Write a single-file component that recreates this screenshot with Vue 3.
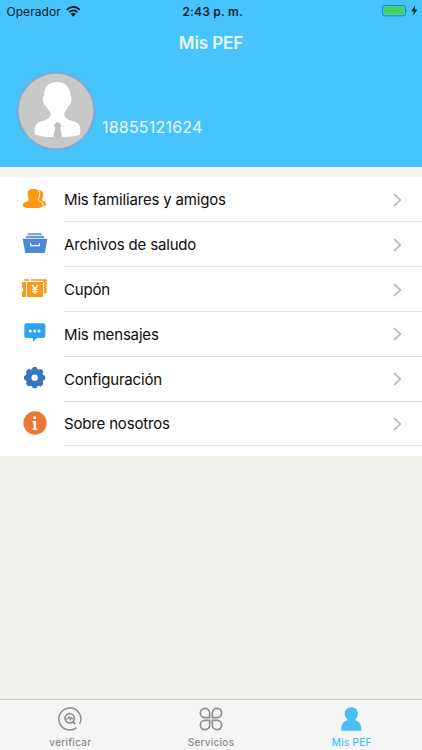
<template>
  <div class="page">
    <header class="header">
      <div class="status-bar">
        <div class="carrier">
          <span class="carrier-name">Operador</span>
          <svg class="wifi" viewBox="0 0 42 32">
            <path d="M2 11 Q21 -6 40 11" />
            <path d="M9 18 Q21 7 33 18" />
            <path class="solid" d="M13.5 23 Q21 16 28.5 23 L21 31 Z" />
          </svg>
        </div>
        <div class="time">2:43 p. m.</div>
        <div class="power">
          <svg class="battery" viewBox="0 0 78 34">
            <rect class="case" x="1.5" y="1.5" width="69" height="31" rx="6" />
            <rect class="charge" x="6" y="6" width="60" height="22" rx="2" />
            <path class="cap" d="M74 11 Q78 17 74 23 Z" />
          </svg>
          <svg class="bolt" viewBox="0 0 18 32">
            <path d="M12 1 L0 18 H8 L5 31 L18 13 H10 Z" />
          </svg>
        </div>
      </div>
      <h1 class="title">Mis PEF</h1>
      <div class="profile">
        <svg class="avatar" viewBox="49 33 240 240">
          <circle cx="169" cy="153" r="115.5" fill="#c8c8c8" stroke="#72aedb" stroke-width="7" />
          <path
            fill="#fff"
            d="M172 66 C196 66 212 81 212 107 C217 112 216 119 214 125 C213 132 209 135 206 139 C202 149 194 154 194 162 C194 174 207 180 221 184 C236 188 242 195 242 213 C242 220 242 223 239 225 C224 230 208 231 186 231 H161 C140 231 122 228 108 224 C105 222 105 219 105 214 C105 196 111 188 126 184 C140 180 153 174 153 162 C153 154 143 149 139 139 C135 135 133 132 131 125 C129 119 128 112 133 107 C133 81 148 66 172 66 Z"
          />
          <path fill="#c0c0c0" d="M168 189 L173 186 L179 189 L185 197 L182 203 L187 232 H160 L167 203 L162 197 Z" />
        </svg>
        <span class="phone">18855121624</span>
      </div>
    </header>

    <main class="menu">
      <div v-for="item in items" :key="item.icon" class="row">
        <svg v-if="item.icon === 'friends'" class="icon" viewBox="0 0 84 84" fill="#ff9813">
          <path d="M52 12 C63 10 71 17 70 28 C70 35 66 37 66 41 C66 46 78 44 78 55 C78 59 74 61 68 62 L48 48 Z" />
          <path
            stroke="#fff"
            stroke-width="3"
            d="M40 7 C53 7 60 16 59 27 C58 35 54 38 54 42 C56 47 69 46 69 58 C69 67 55 68 39 68 C23 68 7 67 7 58 C7 46 22 47 26 42 C26 38 22 35 21 27 C20 16 27 7 40 7 Z"
          />
        </svg>
        <svg v-else-if="item.icon === 'archive'" class="icon" viewBox="0 6 84 84">
          <path d="M25 12 H64 L67 18 H22 Z" fill="#74b0e5" />
          <path d="M20 20 H70 L74 27 H16 Z" fill="#639be0" />
          <path d="M8 29 H82 L75 69 Q75 72 71 72 H19 Q15 72 15 69 Z" fill="#4c88d8" />
          <path d="M32 43 V50 H58 V43" fill="none" stroke="#fff" stroke-width="4" />
        </svg>
        <svg v-else-if="item.icon === 'coupon'" class="icon" viewBox="0 5 84 84" fill="#f99a1c">
          <path d="M13 15 H28 V19 H10 Z" />
          <path d="M33 15 H81 V20 L78 24 L82 28 L78 32 L82 36 L78 40 L82 44 L78 48 L82 52 L78 56 L74 59 L70 56 L74 52 L70 48 L74 44 L70 40 L74 36 L70 32 L74 28 L70 24 V19 H33 Z" />
          <path d="M6 23 H18 V68 H6 V53 Q14 46 6 37 Z" />
          <path d="M21 23 H69 V68 H21 Z" />
          <path d="M36 32 L45 43 L54 32 M45 43 V59 M37 45 H53 M37 52 H53" fill="none" stroke="#fff" stroke-width="4" />
        </svg>
        <svg v-else-if="item.icon === 'messages'" class="icon" viewBox="0 0 84 84">
          <path d="M19 10 H70 Q76 10 76 16 V48 Q76 54 70 54 H51 L39 66 V54 H19 Q13 54 13 48 V16 Q13 10 19 10 Z" fill="#2ba4ed" />
          <circle cx="31" cy="33" r="4.5" fill="#fff" />
          <circle cx="44" cy="33" r="4.5" fill="#fff" />
          <circle cx="57" cy="33" r="4.5" fill="#fff" />
        </svg>
        <svg v-else-if="item.icon === 'settings'" class="icon" viewBox="0 0 84 84" fill="#3775bd">
          <rect
            v-for="angle in gearAngles"
            :key="angle"
            x="36.5"
            y="6"
            width="15"
            height="20"
            rx="5"
            :transform="`rotate(${angle} 44 38)`"
          />
          <circle cx="44" cy="38" r="27.5" />
          <circle cx="44" cy="38" r="9.5" fill="#fff" />
        </svg>
        <svg v-else class="icon" viewBox="0 0 84 84">
          <circle cx="45" cy="39" r="35" fill="#e9793a" />
          <circle cx="44" cy="23" r="4.5" fill="#fff" />
          <path d="M37 33 H48 V55 H52 V59 H37 V55 H41 V37 H37 Z" fill="#fff" />
        </svg>
        <div class="row-body">
          <span class="label">{{ item.label }}</span>
          <svg class="chevron" viewBox="0 0 9 14">
            <path d="M1 1 L7.3 7 L1 13" />
          </svg>
        </div>
      </div>
    </main>

    <nav class="tabs">
      <div class="tab">
        <svg class="tab-icon" viewBox="0 0 72 72">
          <path d="M56 62 A33 33 0 1 1 65 51" stroke-width="4.5" />
          <circle cx="35" cy="34" r="14" stroke-width="5" />
          <path d="M44 43 L51 51" stroke-width="6" />
          <path d="M24 36 H29 L33 29 L37 38 L40 32 L42 35 H46" stroke-width="3.5" />
        </svg>
        <span>verificar</span>
      </div>
      <div class="tab">
        <svg class="tab-icon" viewBox="0 0 72 72" stroke-width="5">
          <path d="M32 32 H17 A14 14 0 1 1 32 17 Z" />
          <path d="M40 32 V17 A14 14 0 1 1 55 32 Z" />
          <path d="M32 40 V55 A14 14 0 1 1 17 40 Z" />
          <path d="M40 40 H55 A14 14 0 1 1 40 55 Z" />
        </svg>
        <span>Servicios</span>
      </div>
      <div class="tab active">
        <svg class="tab-icon" viewBox="0 0 72 72">
          <path d="M34 1 C47 1 54 10 54 21 C54 29 49 34 45 39 C55 42 64 50 64 64 V71 H4 V64 C4 50 13 42 23 39 C19 34 14 29 14 21 C14 10 21 1 34 1 Z" />
        </svg>
        <span>Mis PEF</span>
      </div>
    </nav>
  </div>
</template>

<script setup>
const items = [
  { icon: 'friends', label: 'Mis familiares y amigos' },
  { icon: 'archive', label: 'Archivos de saludo' },
  { icon: 'coupon', label: 'Cupón' },
  { icon: 'messages', label: 'Mis mensajes' },
  { icon: 'settings', label: 'Configuración' },
  { icon: 'about', label: 'Sobre nosotros' },
]

const gearAngles = [0, 45, 90, 135, 180, 225, 270, 315]
</script>

<style>
body {
  margin: 0;
}
</style>

<style scoped>
.page {
  display: flex;
  flex-direction: column;
  height: 750px;
  background: #f1f0eb;
  font-family: Inter, "Liberation Sans", sans-serif;
  overflow: hidden;
}

.header {
  height: 167px;
  background: #48c4fd;
  border-bottom: 10px solid #f3f3f3;
}

.status-bar {
  display: grid;
  grid-template-columns: 1fr auto 1fr;
  align-items: center;
  height: 22px;
  padding: 0 5px 0 6.5px;
  font-size: 12px;
  color: #0b1c25;
}

.carrier,
.power {
  display: flex;
  align-items: center;
}

.carrier-name {
  letter-spacing: 0.05px;
}

.wifi {
  width: 14.5px;
  height: 11px;
  margin-left: 5px;
  fill: none;
  stroke: #0b1c25;
  stroke-width: 5;
}

.wifi .solid {
  fill: #0b1c25;
  stroke: none;
}

.time {
  padding-left: 2px;
  font-weight: 600;
  letter-spacing: 0.2px;
}

.power {
  justify-content: flex-end;
}

.battery {
  width: 26px;
  height: 11.3px;
}

.case {
  fill: none;
  stroke: #22779b;
  stroke-width: 2.5;
}

.charge {
  fill: #43d551;
}

.cap {
  fill: #22779b;
}

.bolt {
  width: 6.5px;
  height: 11px;
  margin-left: 3px;
  fill: #0b1c25;
}

.title {
  margin: 0;
  height: 44px;
  line-height: 43px;
  text-align: center;
  font-size: 17px;
  font-weight: 600;
  letter-spacing: -0.1px;
  color: #e9f9ff;
}

.profile {
  display: flex;
  align-items: center;
  padding: 5px 0 0 16px;
}

.avatar {
  width: 80px;
  height: 80px;
}

.phone {
  margin: 31px 0 0 6px;
  font-size: 16px;
  line-height: 20px;
  letter-spacing: 0.2px;
  color: #e9f9ff;
}

.menu {
  box-sizing: border-box;
  height: 279px;
  padding-top: 0.6px;
  background: #fff;
}

.row {
  display: flex;
  align-items: center;
  height: 44.8px;
}

.icon {
  width: 28px;
  height: 28px;
  margin: 0 16px 0 20px;
}

.row-body {
  display: flex;
  flex: 1;
  align-items: center;
  justify-content: space-between;
  box-sizing: border-box;
  height: 100%;
  padding: 1px 20px 0 0;
  border-bottom: 1px solid #e3e3e4;
}

.label {
  font-size: 15px;
  letter-spacing: -0.17px;
  color: #0c0c0c;
}

.chevron {
  width: 9px;
  height: 14px;
  fill: none;
  stroke: #bdbdc1;
  stroke-width: 1.8;
}

.tabs {
  display: grid;
  grid-template-columns: repeat(3, 1fr);
  height: 50px;
  margin-top: auto;
  background: #f6f5f6;
  border-top: 1px solid #c9c8c5;
}

.tab {
  display: flex;
  flex-direction: column;
  align-items: center;
  padding-top: 7px;
  font-size: 10px;
  font-weight: 500;
  letter-spacing: 0.25px;
  line-height: 14px;
  color: #8b8b8c;
}

.tab-icon {
  width: 24px;
  height: 24px;
  margin-bottom: 4px;
  fill: none;
  stroke: #8e8e8e;
  overflow: visible;
}

.tab.active {
  color: #48c0f6;
}

.active .tab-icon {
  fill: #48c0f6;
  stroke: none;
}
</style>
